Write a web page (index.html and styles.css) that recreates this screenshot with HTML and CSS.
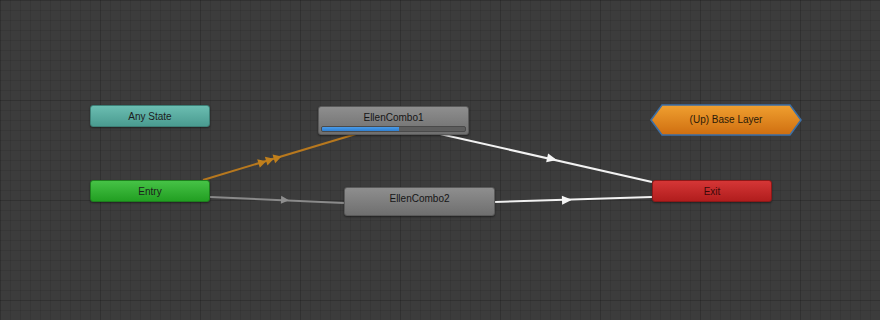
FILE: index.html
```html
<!DOCTYPE html>
<html lang="en">
<head>
  <meta charset="UTF-8" />
  <title>Animator</title>
  <link rel="stylesheet" href="styles.css">
</head>
<body>
<div class="graph">
  <svg class="edges" width="880" height="320" viewBox="0 0 880 320">
    <!-- entry -> combo1 -->
    <line x1="203" y1="180" x2="356" y2="134" stroke="#b7781e" stroke-width="2"/>
    <g fill="#c07f1c" transform="translate(270 160) rotate(-16.7)">
      <polygon points="-12,-4.5 -4,0 -12,4.5"/>
      <polygon points="-4,-4.5 4,0 -4,4.5"/>
      <polygon points="4,-4.5 12,0 4,4.5"/>
    </g>
    <!-- entry -> combo2 -->
    <line x1="210" y1="197" x2="344" y2="203" stroke="#8a8a8a" stroke-width="2"/>
    <polygon fill="#8e8e8e" points="-4,-4 4,0 -4,4" transform="translate(285 200) rotate(2.6)"/>
    <!-- combo1 -> exit -->
    <line x1="440" y1="134" x2="652" y2="182" stroke="#f2f2f2" stroke-width="2"/>
    <polygon fill="#f5f5f5" points="-5,-4.5 5,0 -5,4.5" transform="translate(552 159) rotate(12.8)"/>
    <!-- combo2 -> exit -->
    <line x1="494" y1="202" x2="652" y2="197" stroke="#f2f2f2" stroke-width="2"/>
    <polygon fill="#f5f5f5" points="-5,-4.5 5,0 -5,4.5" transform="translate(567 200) rotate(-1.8)"/>
  </svg>

  <div class="node any-state" style="left:90px;top:105px;">Any State</div>
  <div class="node entry" style="left:90px;top:180px;">Entry</div>
  <div class="node exit" style="left:652px;top:180px;">Exit</div>

  <div class="node state" style="left:318px;top:106px;">
    <span class="label">EllenCombo1</span>
    <div class="progress"><div class="fill" style="width:54%;"></div></div>
  </div>
  <div class="node state" style="left:344px;top:187px;">
    <span class="label">EllenCombo2</span>
  </div>

  <div class="layer" style="left:650px;top:104px;">
    <svg width="152" height="32" viewBox="0 0 152 32">
      <defs>
        <linearGradient id="org" x1="0" y1="0" x2="0" y2="1">
          <stop offset="0" stop-color="#f0a030"/>
          <stop offset="1" stop-color="#cf6e10"/>
        </linearGradient>
      </defs>
      <polygon points="1,16 12,1 140,1 151,16 140,31 12,31" fill="url(#org)" stroke="#3c6fa6" stroke-width="1.6"/>
    </svg>
    <span class="layer-label">(Up) Base Layer</span>
  </div>
</div>
</body>
</html>
```

FILE: styles.css
```css
body {
  margin: 0;
  background-color: #3a3a3a;
  font-family: 'Liberation Sans', Arial, sans-serif;
}

.graph {
  position: relative;
  width: 880px;
  height: 320px;
  overflow: hidden;
  background-color: #3c3c3c;
  background-image:
    linear-gradient(to right, rgba(0, 0, 0, 0.1) 1px, transparent 1px),
    linear-gradient(to bottom, rgba(0, 0, 0, 0.1) 1px, transparent 1px),
    linear-gradient(to right, rgba(0, 0, 0, 0.09) 1px, transparent 1px),
    linear-gradient(to bottom, rgba(0, 0, 0, 0.09) 1px, transparent 1px);
  background-size: 100px 100px, 100px 100px, 10px 10px, 10px 10px;
  background-position: 0 0, 0 0, 0 0, 0 0;
}

.edges {
  position: absolute;
  left: 0;
  top: 0;
}

.node {
  position: absolute;
  box-sizing: border-box;
  width: 120px;
  height: 22px;
  border-radius: 3px;
  font-size: 10px;
  color: #1c1c1c;
  display: flex;
  align-items: center;
  justify-content: center;
  box-shadow: 0 1px 2px rgba(0, 0, 0, 0.45);
}

.any-state {
  background: linear-gradient(#6bbdb1, #4a9b90);
  border: 1px solid #3d7f76;
}

.entry {
  background: linear-gradient(#46c246, #229f22);
  border: 1px solid #1d7f1d;
}

.exit {
  background: linear-gradient(#d53636, #b11d1d);
  border: 1px solid #8d1818;
  color: #3a0a0a;
}

.state {
  width: 151px;
  height: 29px;
  flex-direction: column;
  justify-content: flex-start;
  padding-top: 5px;
  background: linear-gradient(#8e8e8e, #6f6f6f);
  border: 1px solid #5a5a5a;
  color: #151515;
}

.state .label {
  line-height: 12px;
}

.progress {
  position: absolute;
  left: 2px;
  right: 2px;
  bottom: 2px;
  height: 6px;
  border-radius: 2px;
  background: #5d5d5d;
  border: 1px solid #4a4a4a;
  box-sizing: border-box;
  overflow: hidden;
}

.progress .fill {
  height: 100%;
  background: linear-gradient(#4a9be8, #2f7fd0);
}

.layer {
  position: absolute;
  width: 152px;
  height: 32px;
}

.layer svg {
  display: block;
}

.layer-label {
  position: absolute;
  left: 0;
  top: 0;
  width: 152px;
  line-height: 32px;
  text-align: center;
  font-size: 10px;
  color: #2a1a08;
}
```
